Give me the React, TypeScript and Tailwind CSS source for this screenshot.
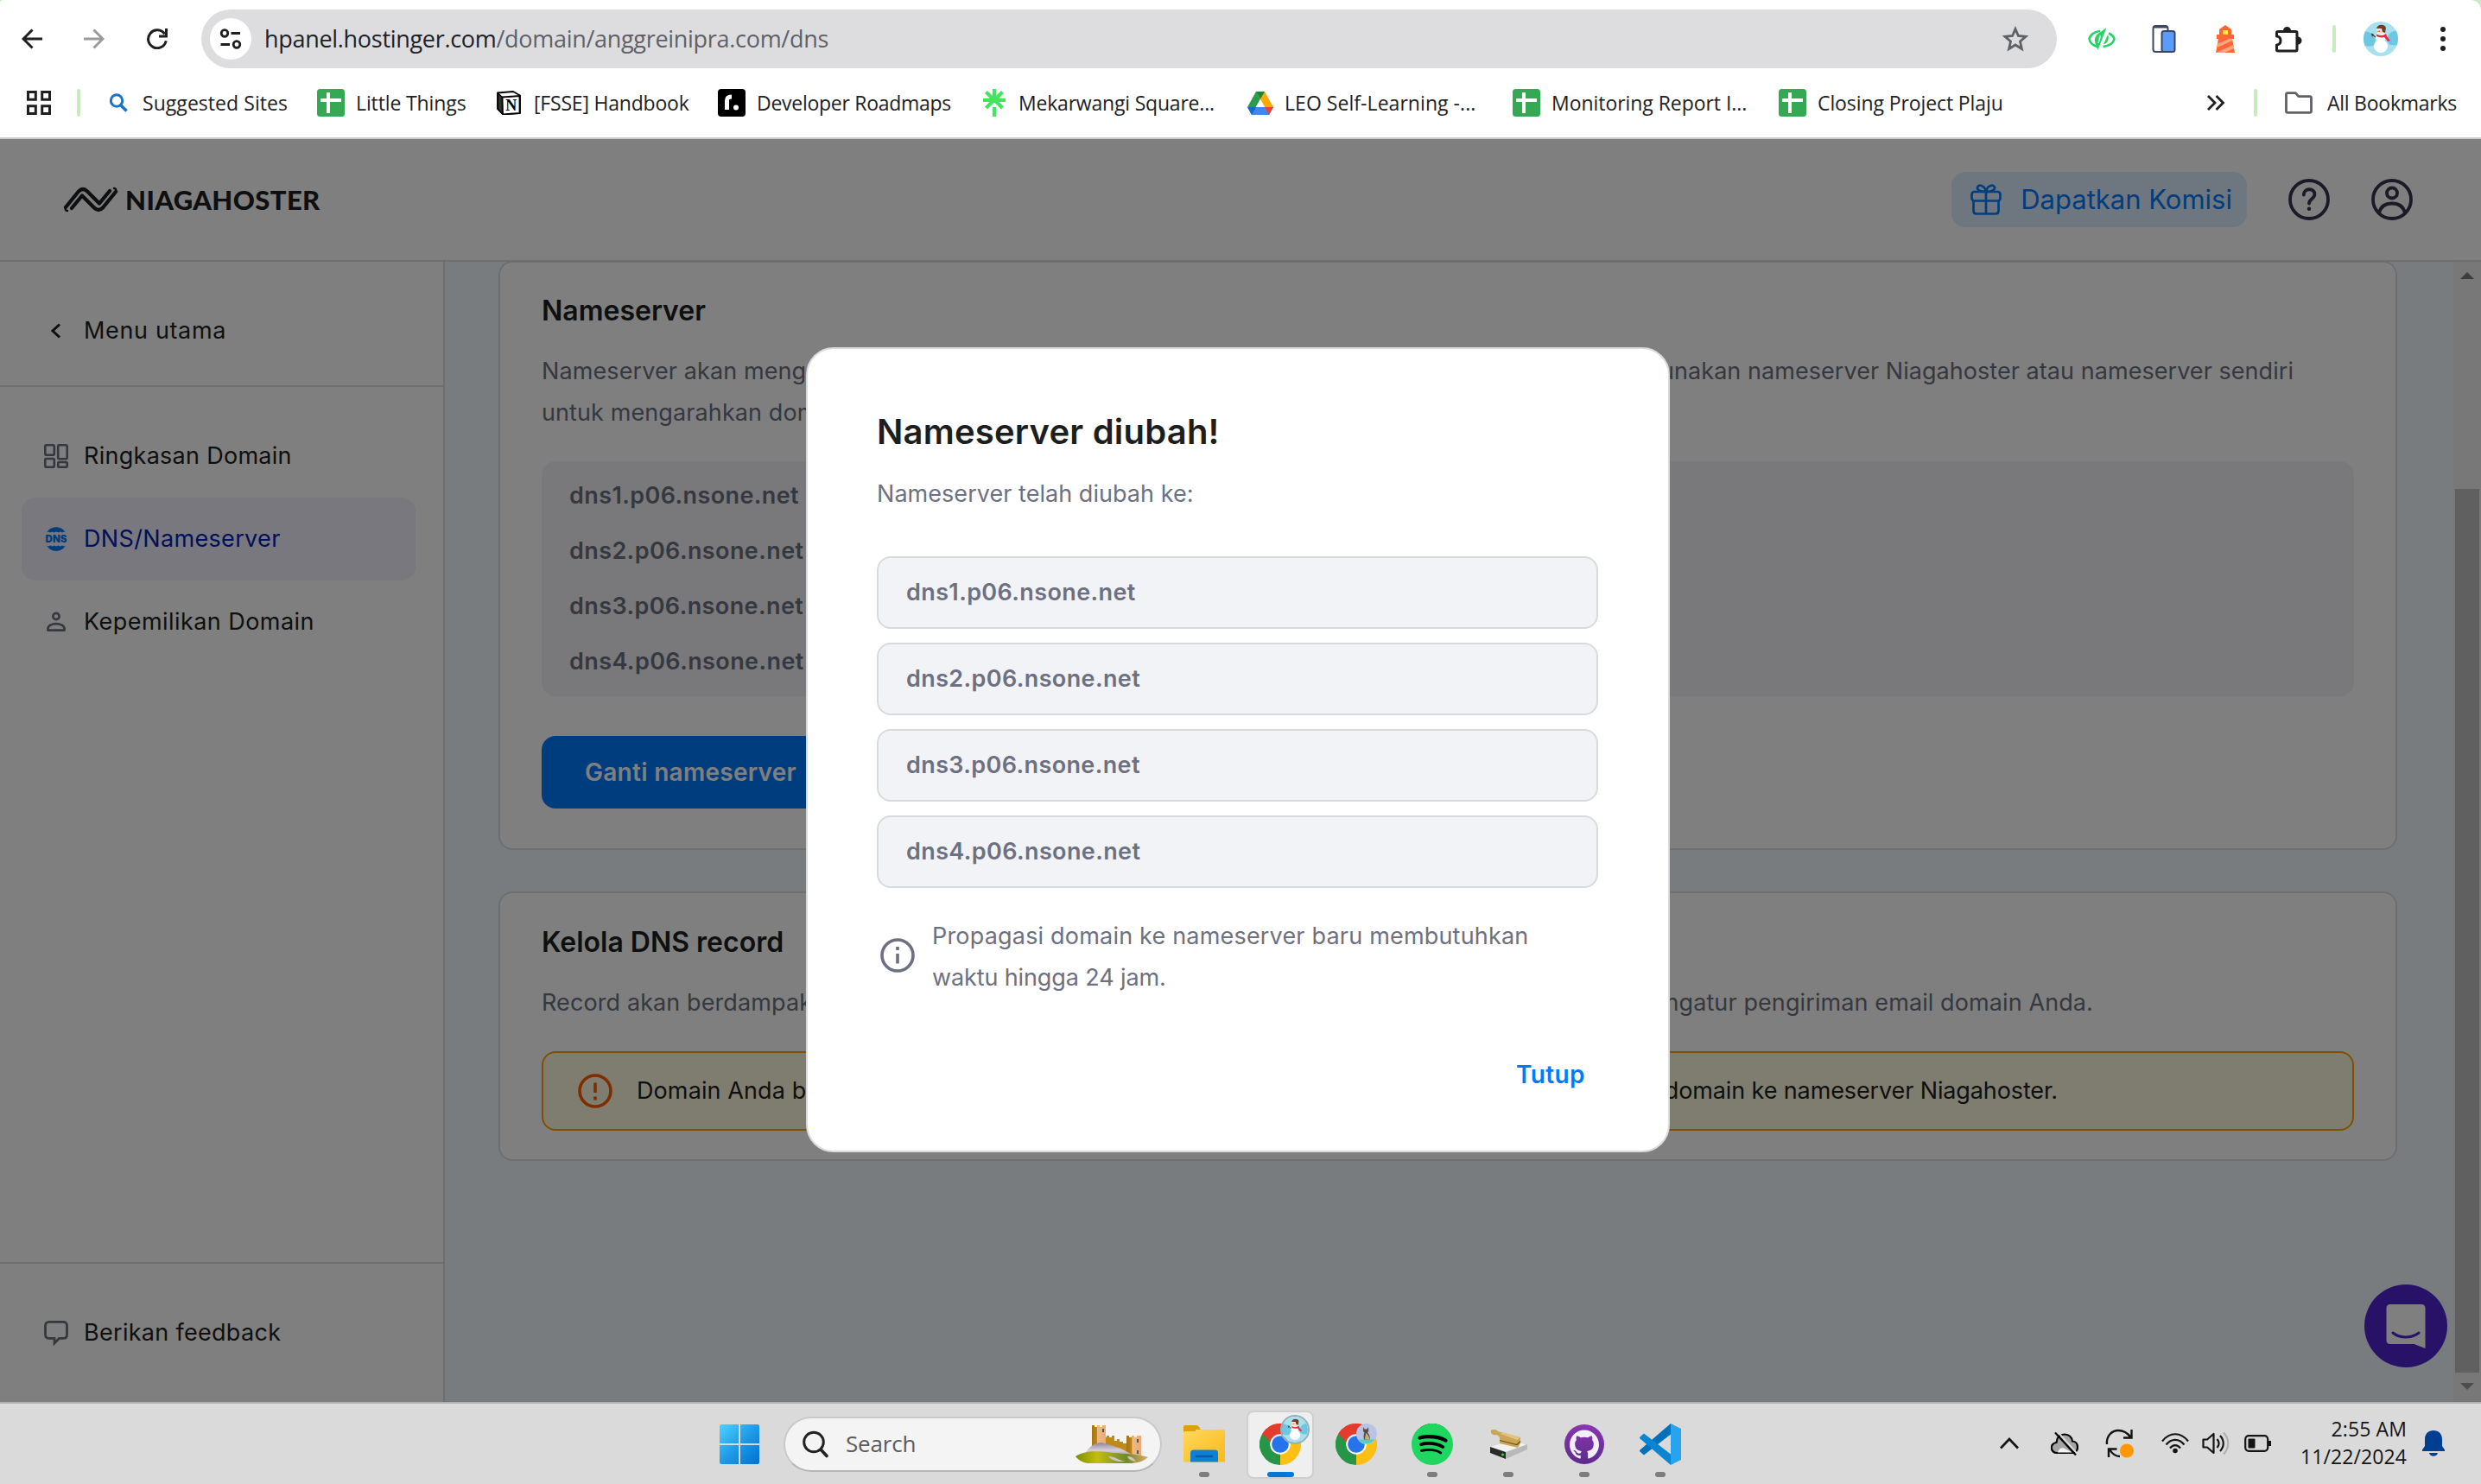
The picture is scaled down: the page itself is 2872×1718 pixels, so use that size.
import type { ReactNode } from "react";
import { SiGithub, SiSpotify } from "react-icons/si";

/* ---------- browser chrome icons ---------- */

const BackIcon = ({ className }: { className: string }) => (
  <svg viewBox="0 0 24 24" className={className} fill="none" stroke="currentColor" strokeWidth="3">
    <path d="M24 12H2.5M12.5 1.5 2 12l10.5 10.5" />
  </svg>
);

const ReloadIcon = () => (
  <svg viewBox="0 0 24 24" className="ml-[49px] h-6 w-6 text-[#1f1f1f]" fill="none" stroke="currentColor" strokeWidth="3">
    <path d="M22.2 14.2A10.4 10.4 0 1 1 20.6 6.400" />
    <path d="M22.500 0v8.900h-8.500" />
  </svg>
);

const TuneIcon = () => (
  <svg viewBox="0 0 26 24" className="h-6 w-[26px]" fill="none" stroke="#1f1f1f" strokeWidth="2.800">
    <circle cx="6" cy="5.500" r="3.800" />
    <path d="M13.500 5.500H24M1.500 18.500H12" />
    <circle cx="20" cy="18.500" r="3.800" />
  </svg>
);

const StarIcon = () => (
  <svg viewBox="0 0 32 30" className="h-[30px] w-8" fill="none" stroke="#5f6166" strokeWidth="2.800" strokeLinejoin="miter">
    <path d="m16 3.500 3.400 8 8.600.8-6.500 5.700 1.900 8.500L16 22l-7.400 4.500 1.900-8.500L4 12.300l8.600-.8z" />
  </svg>
);

const EyeLeafIcon = () => (
  <svg viewBox="0 0 32 26" className="ml-[36px] h-[26px] w-8">
    <path d="M12 22.500C6 21 2 17 1.500 13 2.500 8 8 4.500 14 4" fill="none" stroke="#25d366" strokeWidth="2.600" />
    <path d="M24 6.500c4 2 6 4.500 6.500 6.500-1 5-6 8-13 9" fill="none" stroke="#25d366" strokeWidth="2.600" />
    <path d="M21.500 0 11.500 26l-1.500-5c-4-6-2-13 4-15.500z" fill="#25d366" />
    <path d="M18 19.500c5-1.500 7-7 5-11.500z" fill="#25d366" />
    <path d="m14.500 9-2.500 9" stroke="#fff" strokeWidth="1.400" />
  </svg>
);

const DevicesIcon = () => (
  <svg viewBox="0 0 28 34" className="ml-[42px] h-[34px] w-7">
    <rect x="1.500" y="2" width="17" height="30" rx="3" fill="#fff" stroke="#3c4663" strokeWidth="2" />
    <path d="M2 4.500C2 2.500 3 2 4.500 2h11c1.500 0 2.500.5 2.500 2.500z" fill="#3c4663" />
    <rect x="11.500" y="8" width="15" height="24" rx="2.500" fill="#5a9cf8" stroke="#3c4663" strokeWidth="2" />
  </svg>
);

const LighthouseIcon = () => (
  <svg viewBox="0 0 24 32" className="ml-[45px] h-8 w-6">
    <path d="M12 0 19 5v6h3v5H2v-5h3V5z" fill="#ff6633" />
    <rect x="9" y="6" width="6" height="5" fill="#ffeb3b" />
    <path d="M4 16h16l3 16H1z" fill="#ff6633" />
    <path d="M3.500 21.500 16 16h4l.4 2L2.500 26zM2 31.500l19.500-8.600.8 4.100L11 32H1z" fill="#ffa385" />
  </svg>
);

const PuzzleIcon = () => (
  <svg viewBox="0 0 34 34" className="ml-[44px] h-[34px] w-[34px]">
    <path
      d="M5 8.500h20.500q1.500 0 1.500 1.500v19.500q0 1.500-1.500 1.500H5q-1.500 0-1.500-1.500V24c6-.6 6-9.400 0-10v-4q0-1.500 1.500-1.500z"
      fill="none"
      stroke="#1f1f1f"
      strokeWidth="3"
      strokeLinejoin="round"
    />
    <path d="M11 7.500a4.500 4.500 0 0 1 9 0zM28 14.500a4.500 4.500 0 0 1 0 9z" fill="#1f1f1f" />
  </svg>
);

const Snowman = ({ className }: { className: string }) => (
  <svg viewBox="0 0 40 40" className={className}>
    <defs>
      <clipPath id="snowClip">
        <circle cx="20" cy="20" r="20" />
      </clipPath>
    </defs>
    <g clipPath="url(#snowClip)">
      <rect width="40" height="40" fill="#a9e0f0" />
      <path d="M0 12c6-2 9 2 12 5s2 8 0 10-8 2-12 0zM40 10c-6 0-11 4-12 8s1 9 4 9 6 1 8 0z" fill="#6cc8e2" />
      <ellipse cx="20" cy="28.500" rx="8" ry="7.500" fill="#fff" />
      <ellipse cx="20" cy="18" rx="6" ry="6.500" fill="#fff" />
      <circle cx="20" cy="10" r="5" fill="#f4e4dc" />
      <path d="M15 8c1-5 9-6 11-1l-1 6-3-1-1-4z" fill="#6b3f2a" />
      <path d="m19 10-4 1.500 4 .8z" fill="#f08030" />
      <path d="M15 14.500c4 2 8 2 11-.5l1 3 4 5-3 1-4-5c-3 1-7 0-9-1z" fill="#d9343f" />
      <path d="m14 18-5-4M10 17l1-3" stroke="#4a3328" strokeWidth="1.200" />
    </g>
  </svg>
);

const AppsIcon = () => (
  <svg viewBox="0 0 28 28" className="h-7 w-7" fill="none" stroke="#1f1f1f" strokeWidth="3">
    <path d="M1.500 1.500h8.800v8.800H1.500zM17.700 1.500h8.800v8.800h-8.800zM1.500 17.700h8.800v8.800H1.500zM17.700 17.700h8.800v8.800h-8.800z" />
  </svg>
);

const MagnifierIcon = () => (
  <svg viewBox="0 0 22 22" className="h-[22px] w-[22px]" fill="none" stroke="#1a73c8">
    <circle cx="9" cy="8.500" r="6.700" strokeWidth="3" />
    <path d="m13.500 13.500 7 7" strokeWidth="3.600" />
  </svg>
);

const SheetsIcon = () => (
  <svg viewBox="0 0 32 32" className="h-8 w-8">
    <rect width="32" height="32" rx="3.500" fill="#34a853" />
    <path d="M11 4h4v7h13v4H15v13h-4V15H4v-4h7z" fill="#fff" />
  </svg>
);

const NotionIcon = () => (
  <svg viewBox="0 0 28 28" className="h-7 w-7">
    <path d="M1 2.500 19 1l8 4.500V26L7.500 27.500 1 21z" fill="#fff" stroke="#000" strokeWidth="1.800" strokeLinejoin="round" />
    <path d="m1.500 3 5 4.500V27L1.500 21z" stroke="#000" strokeWidth="1.400" fill="#333" />
    <path d="M6.500 7.500 26.500 6v20L7 27.300z" fill="#fff" stroke="#000" strokeWidth="1.800" />
    <text x="16.700" y="23" textAnchor="middle" fontFamily="Liberation Serif, serif" fontWeight="700" fontSize="18">
      N
    </text>
  </svg>
);

const RoadmapIcon = () => (
  <svg viewBox="0 0 32 32" className="h-8 w-8">
    <rect width="32" height="32" rx="4" fill="#000" />
    <path d="M10.500 24V13.500c0-3 1.500-4.500 5.500-4.500" stroke="#fff" strokeWidth="5" fill="none" />
    <circle cx="21" cy="21.500" r="3" fill="#fff" />
  </svg>
);

const LinktreeIcon = () => (
  <svg viewBox="0 0 28 32" className="h-8 w-7" stroke="#43e55e" strokeWidth="4.200">
    <path d="M14 0v15M14 21v11M1 12.800h26M4.500 3.500 14 13l9.500-9.500M4.500 22 14 12.500 23.500 22" fill="none" />
  </svg>
);

const DriveIcon = () => (
  <svg viewBox="0 0 30 27" className="h-[27px] w-[30px]">
    <path d="M10 0h10l-5 8.500L5 26 0 18z" fill="#2a9d4a" />
    <path d="M10 0h10l10 18H20z" fill="#fbab00" />
    <path d="m15 8.500-5-8.500h10z" fill="#15883a" />
    <path d="m0 18 5 9h20l5-9z" fill="#4285f4" />
    <path d="M0 18h10l-5 9z" fill="#1b66d1" />
    <path d="M20 18h10l-5 9z" fill="#ea4335" />
    <path d="M15 9.500 20 18H10z" fill="#fff" />
  </svg>
);

const FolderIcon = () => (
  <svg viewBox="0 0 32 26" className="h-[26px] w-8" fill="none" stroke="#5f6166" strokeWidth="2.800" strokeLinejoin="round">
    <path d="M1.500 3.500q0-1.800 1.800-1.800h9l3.500 4h13q1.700 0 1.700 1.800v15q0 1.800-1.700 1.800H3.300q-1.800 0-1.800-1.800z" />
  </svg>
);

const bookmarks: { label: string; icon: ReactNode; cls: string; text: string }[] = [
  { label: "Suggested Sites", icon: <MagnifierIcon />, cls: "w-[241px] gap-[17px]", text: "tracking-[0.05px]" },
  { label: "Little Things", icon: <SheetsIcon />, cls: "w-[208px] gap-[13px]", text: "tracking-[-0.12px]" },
  { label: "[FSSE] Handbook", icon: <NotionIcon />, cls: "w-[256px] gap-[15px]", text: "tracking-[-0.2px]" },
  { label: "Developer Roadmaps", icon: <RoadmapIcon />, cls: "w-[306px] gap-[13px]", text: "tracking-[-0.28px]" },
  { label: "Mekarwangi Square...", icon: <LinktreeIcon />, cls: "w-[307px] gap-[14px]", text: "tracking-[-0.2px]" },
  { label: "LEO Self-Learning -...", icon: <DriveIcon />, cls: "w-[307px] gap-[13px]", text: "tracking-[0.05px]" },
  { label: "Monitoring Report I...", icon: <SheetsIcon />, cls: "w-[308px] gap-[13px]", text: "tracking-[-0.05px]" },
  { label: "Closing Project Plaju", icon: <SheetsIcon />, cls: "w-[260px] gap-[13px]", text: "tracking-[-0.1px]" },
];

function BrowserChrome() {
  return (
    <div className="bg-[#c8ecc0]">
      <div className="h-[161px] rounded-tl-[4px] rounded-tr-[12px] border-b-2 border-[#c9cacc] bg-white font-['Open_Sans',sans-serif] text-[#202124]">
        <div className="flex h-[90px] items-center pl-[25px]">
          <BackIcon className="h-6 w-6 text-[#1f1f1f]" />
          <BackIcon className="ml-[48px] h-6 w-6 rotate-180 text-[#9a9a9a]" />
          <ReloadIcon />
          <div className="ml-[39px] flex h-[68px] w-[2148px] items-center rounded-full bg-[#dddde0] pr-[32px] pl-[10px]">
            <div className="flex h-12 w-12 items-center justify-center rounded-full bg-white">
              <TuneIcon />
            </div>
            <div className="ml-[15px] flex-1 text-[27px] tracking-[-0.3px]">
              hpanel.hostinger.com<span className="text-[#5f6166]">/domain/anggreinipra.com/dns</span>
            </div>
            <StarIcon />
          </div>
          <EyeLeafIcon />
          <DevicesIcon />
          <LighthouseIcon />
          <PuzzleIcon />
          <div className="ml-[34px] h-8 w-1 rounded-full bg-[#c8ecc0]" />
          <Snowman className="ml-[32px] h-10 w-10" />
          <div className="ml-[49px] flex flex-col gap-[5px]">
            <i className="h-1.5 w-1.5 rounded-full bg-[#1f1f1f]" />
            <i className="h-1.5 w-1.5 rounded-full bg-[#1f1f1f]" />
            <i className="h-1.5 w-1.5 rounded-full bg-[#1f1f1f]" />
          </div>
        </div>
        <div className="flex h-[58px] items-center pl-[31px] text-[23px] whitespace-nowrap">
          <AppsIcon />
          <div className="mr-[33px] ml-[30px] h-8 w-1 rounded-full bg-[#c8ecc0]" />
          {bookmarks.map((b) => (
            <div key={b.label} className={`flex shrink-0 items-center ${b.cls}`}>
              {b.icon}
              <span className={b.text}>{b.label}</span>
            </div>
          ))}
          <div className="flex flex-1 items-center justify-end pr-[28px]">
            <svg viewBox="0 0 22 18" className="h-[18px] w-[22px]" fill="none" stroke="#1f1f1f" strokeWidth="2.800">
              <path d="m2 1 8 8-8 8M11.500 1l8 8-8 8" />
            </svg>
            <div className="mr-[32px] ml-[33px] h-8 w-1 rounded-full bg-[#c8ecc0]" />
            <FolderIcon />
            <span className="ml-[17px] tracking-[-0.25px]">All Bookmarks</span>
          </div>
        </div>
      </div>
    </div>
  );
}

/* ---------- hosting panel ---------- */

const LogoMark = () => (
  <svg viewBox="0 0 64 30" className="h-[30px] w-16" fill="none" stroke="#1d1e20" strokeWidth="4.300" strokeLinejoin="round" strokeLinecap="round">
    <path d="M3 24 18 5.500q5-5 10 0L42 19.500 54 5" />
    <path d="M61 6 46 24.500q-5 5-10 0L22 10.500 10 25" />
    <path d="M3 24q-1 4 2 4M61 6q1-4-2-4" strokeWidth="2.500" />
  </svg>
);

const GiftIcon = () => (
  <svg viewBox="0 0 36 36" className="h-9 w-9" fill="none" stroke="#007bff" strokeWidth="2.700" strokeLinejoin="round">
    <rect x="1.500" y="9" width="33" height="10.500" rx="3" />
    <path d="M3.500 19.500V31q0 3.500 3.500 3.500h22q3.500 0 3.500-3.500V19.500M18 9v25.500M18 9c-6 0-10.500-2-10-5 .8-4 8.500-3 10 5zM18 9c6 0 10.500-2 10-5-.8-4-8.500-3-10 5z" />
  </svg>
);

const HelpIcon = () => (
  <svg viewBox="0 0 48 48" className="ml-[48px] h-12 w-12" fill="none" stroke="#36344d" strokeWidth="3.800" strokeLinecap="round">
    <circle cx="24" cy="24" r="22" />
    <path d="M17.800 18.500c0-8 12.600-8.500 12.600-.5 0 5-6.400 5.500-6.400 10.500" />
    <path d="M24 34.600v.2" strokeWidth="4.400" />
  </svg>
);

const UserIcon = () => (
  <svg viewBox="0 0 48 48" className="ml-[48px] h-12 w-12" fill="none" stroke="#36344d" strokeWidth="3.800">
    <circle cx="24" cy="24" r="22" />
    <circle cx="24" cy="16.500" r="6" />
    <path d="M9 39.500c2-8 8-11 15-11s13 3 15 11" />
  </svg>
);

const DashboardIcon = () => (
  <svg viewBox="0 0 28 28" className="h-7 w-7" fill="none" stroke="#6d7081" strokeWidth="2.600">
    <rect x="1.300" y="1.300" width="10.500" height="11.500" rx="1.500" />
    <rect x="16.200" y="1.300" width="10.500" height="16" rx="1.500" />
    <rect x="1.300" y="17" width="10.500" height="9.700" rx="1.500" />
    <rect x="16.200" y="21" width="10.500" height="5.700" rx="1.500" />
  </svg>
);

const DnsIcon = () => (
  <svg viewBox="0 0 28 28" className="h-7 w-7">
    <path d="M3 6.500C8-2 20-2 25 6.500l-2-1-2 1-2.300-1-2.300 1-2.400-1-2.400 1-2.300-1-2.300 1-2-1z" fill="#007bff" />
    <path d="M3 21.500c5 8.500 17 8.500 22 0l-2 1-2-1-2.300 1-2.300-1-2.400 1-2.400-1-2.300 1-2.300-1-2 1z" fill="#007bff" />
    <text x="14" y="18" textAnchor="middle" fontFamily="Inter, sans-serif" fontWeight="900" fontSize="11.500" fill="#007bff">
      DNS
    </text>
  </svg>
);

const PersonIcon = () => (
  <svg viewBox="0 0 28 28" className="h-7 w-7" fill="none" stroke="#6d7081" strokeWidth="2.700">
    <circle cx="14" cy="7.500" r="3.600" />
    <path d="M4.400 23.600v-1.500c0-8 19.200-8 19.200 0v1.500z" strokeLinejoin="round" />
  </svg>
);

const ChatIcon = () => (
  <svg viewBox="0 0 28 30" className="h-[30px] w-7" fill="none" stroke="#6d7081" strokeWidth="2.800">
    <path d="M6 2.400h16q4.500 0 4.500 4.500v10q0 4.500-4.500 4.500h-4.500l-5.500 5.600v-5.600H6q-4.500 0-4.500-4.500v-10q0-4.500 4.500-4.500z" />
  </svg>
);

function Header() {
  return (
    <header className="flex h-[142px] items-center border-b-2 border-[#dadce0] bg-white pr-[79px] pl-[73px]">
      <LogoMark />
      <span className="ml-[8px] flex-1 font-['Lato',sans-serif] text-[31px] font-black tracking-[0.4px] text-[#1d1e20]">
        NIAGAHOSTER
      </span>
      <div className="flex h-16 items-center rounded-[16px] bg-[#dcecff] pr-[17px] pl-[22px]">
        <GiftIcon />
        <span className="ml-[22px] text-[31px] tracking-[0px] text-[#007bff]">Dapatkan Komisi</span>
      </div>
      <HelpIcon />
      <UserIcon />
    </header>
  );
}

function Sidebar() {
  return (
    <aside className="flex w-[515px] shrink-0 flex-col border-r-2 border-[#dadce0] bg-white text-[27px] text-[#1d1e20]">
      <div className="flex h-[145px] items-center border-b-2 border-[#dadce0] pt-[16px] pl-[57px]">
        <svg viewBox="0 0 16 20" className="h-5 w-4" fill="none" stroke="#1d1e20" strokeWidth="3">
          <path d="M12 2.500 4 10l8 7.500" />
        </svg>
        <span className="ml-[24px] pt-[2px] tracking-[0.65px]">Menu utama</span>
      </div>
      <nav className="flex flex-1 flex-col pt-[32px] pl-[25px]">
        <a className="flex h-24 w-[456px] items-center pl-[26px]">
          <DashboardIcon />
          <span className="ml-[18px] tracking-[0.28px]">Ringkasan Domain</span>
        </a>
        <a className="flex h-24 w-[456px] items-center rounded-[16px] bg-[#f2f0ff] pl-[26px] text-[#0022b3]">
          <DnsIcon />
          <span className="ml-[18px] tracking-[0.34px]">DNS/Nameserver</span>
        </a>
        <a className="flex h-24 w-[456px] items-center pl-[26px]">
          <PersonIcon />
          <span className="ml-[18px] tracking-[0.45px]">Kepemilikan Domain</span>
        </a>
      </nav>
      <div className="flex h-[162px] items-center border-t-2 border-[#dadce0] pl-[51px]">
        <ChatIcon />
        <span className="ml-[18px] tracking-[0.3px]">Berikan feedback</span>
      </div>
    </aside>
  );
}

const servers = ["dns1.p06.nsone.net", "dns2.p06.nsone.net", "dns3.p06.nsone.net", "dns4.p06.nsone.net"];

function Content() {
  return (
    <main className="flex flex-1 flex-col overflow-hidden bg-[#f1f9fe] pr-[65px] pl-[62px] whitespace-nowrap">
      <section className="-mt-px h-[682px] rounded-[16px] border-2 border-[#dadce0] bg-white px-[48px] pt-[32px]">
        <h2 className="text-[32px] leading-[48px] font-semibold text-[#1d1e20]">Nameserver</h2>
        <div className="mt-[22px] flex h-12 items-center justify-between text-[27px] text-[#6d7081]">
          <p className="tracking-[0.1px]">Nameserver akan menge</p>
          <p className="pr-[70px] tracking-[0.05px]">unakan nameserver Niagahoster atau nameserver sendiri</p>
        </div>
        <p className="text-[27px] leading-[48px] tracking-[0.1px] text-[#6d7081]">untuk mengarahkan dom</p>
        <div className="mt-[32px] rounded-[16px] bg-[#f2f3f6] py-2 pl-[32px]">
          {servers.map((s) => (
            <div key={s} className="h-16 text-[27px] leading-[64px] font-semibold tracking-[0.4px] text-[#6d7081]">
              {s}
            </div>
          ))}
        </div>
        <div className="mt-[46px] h-[84px] w-[346px] rounded-[16px] bg-[#007bff] pl-[50px] text-[28px] leading-[84px] font-semibold tracking-[0.28px] text-white">
          Ganti nameserver
        </div>
      </section>
      <section className="mt-[48px] h-[312px] rounded-[16px] border-2 border-[#dadce0] bg-white px-[48px] pt-[33px]">
        <h2 className="text-[32px] leading-[48px] font-semibold text-[#1d1e20]">Kelola DNS record</h2>
        <div className="mt-[22px] flex h-12 items-center justify-between text-[27px] text-[#6d7081]">
          <p className="tracking-[0.1px]">Record akan berdampak</p>
          <p className="pr-[302px] tracking-[0.1px]">ngatur pengiriman email domain Anda.</p>
        </div>
        <div className="mt-[32px] flex h-[92px] items-center rounded-[16px] border-2 border-[#ffa000] bg-[#fffae1] pr-[341px] pl-[40px] text-[27px] text-[#1d1e20]">
          <svg viewBox="0 0 40 40" className="h-10 w-10" fill="none" stroke="#ff5a00" strokeWidth="3.600">
            <circle cx="20" cy="20" r="18" />
            <path d="M20 10.500V22M20 26.500v4" />
          </svg>
          <div className="ml-[28px] flex flex-1 justify-between">
            <p className="tracking-[0.1px]">Domain Anda be</p>
            <p className="tracking-[-0.12px]">domain ke nameserver Niagahoster.</p>
          </div>
        </div>
      </section>
    </main>
  );
}

function Scrollbar() {
  return (
    <div className="flex w-8 flex-col items-center bg-[#f1f1f1]">
      <svg viewBox="0 0 16 8" className="mt-[12px] h-2 w-4">
        <path d="m8 0 8 8H0z" fill="#7c7c7c" />
      </svg>
      <div className="mt-[243px] h-[1023px] w-7 bg-[#c1c1c1]" />
      <svg viewBox="0 0 16 8" className="mt-[12px] h-2 w-4">
        <path d="M0 0h16L8 8z" fill="#9a9a9a" />
      </svg>
    </div>
  );
}

function ChatLauncher() {
  return (
    <div className="absolute top-[1326px] right-[39px] flex h-24 w-24 items-center justify-center rounded-full bg-[#5025d1]">
      <svg viewBox="0 0 46 52" className="h-[52px] w-[46px]">
        <path d="M5 1h36q4.500 0 4.500 4.500V52l-13-5H5Q.5 47 .5 42.500v-37Q.5 1 5 1z" fill="#fff" />
        <path d="M8 34c8 6.500 22 6.500 30 0" fill="none" stroke="#5025d1" strokeWidth="3" strokeLinecap="round" />
      </svg>
    </div>
  );
}

function Modal() {
  return (
    <div className="absolute inset-0 flex items-start bg-black/50 pt-[241px] pl-[933px]">
      <div className="h-[932px] w-[1000px] rounded-[32px] border-2 border-[#d8dadb] bg-white pr-[81px] pl-[80px] pt-[64px] text-[27px] text-[#6d7081]">
        <h1 className="text-[40px] leading-[64px] font-semibold tracking-[0.2px] text-[#1d1e20]">Nameserver diubah!</h1>
        <p className="mt-[16px] leading-[48px] tracking-[0.04px]">Nameserver telah diubah ke:</p>
        <div className="mt-[48px] flex flex-col gap-4">
          {servers.map((s) => (
            <div
              key={s}
              className="h-[84px] rounded-[16px] border-2 border-[#d8dadb] bg-[#f2f3f6] pl-[32px] leading-[80px] font-semibold tracking-[0.38px]"
            >
              {s}
            </div>
          ))}
        </div>
        <div className="mt-[32px] flex items-center pl-[4px]">
          <svg viewBox="0 0 40 40" className="-mt-[5px] h-10 w-10" fill="none" stroke="#6d7081" strokeWidth="3.600">
            <circle cx="20" cy="20" r="18" />
            <path d="M20 18v11.500M20 10v4" />
          </svg>
          <div className="ml-[20px] leading-[48px]">
            <p className="tracking-[0.19px]">Propagasi domain ke nameserver baru membutuhkan</p>
            <p className="tracking-[-0.12px]">waktu hingga 24 jam.</p>
          </div>
        </div>
        <div className="mt-[64px] pr-[15px] text-right text-[28px] leading-[48px] font-semibold tracking-[0.4px] text-[#007bff]">Tutup</div>
      </div>
    </div>
  );
}

/* ---------- taskbar ---------- */

const WindowsIcon = () => (
  <svg viewBox="0 0 46 46" className="h-[46px] w-[46px]">
    <defs>
      <linearGradient id="win" x1="0" y1="0" x2="1" y2="1">
        <stop offset="0" stopColor="#4fd2ff" />
        <stop offset=".5" stopColor="#1f9be8" />
        <stop offset="1" stopColor="#0070cf" />
      </linearGradient>
    </defs>
    <path d="M1.500 0H22v22H0V1.500zM24 0h20.500L46 1.500V22H24zM0 24h22v22H1.500L0 44.500zM24 24h22v20.500L44.500 46H24z" fill="url(#win)" />
  </svg>
);

const CastleIcon = () => (
  <svg viewBox="0 0 84 44" className="h-11 w-[84px]">
    <defs>
      <linearGradient id="hill" x1="0" y1="0" x2="1" y2="0">
        <stop offset="0" stopColor="#7d8f00" />
        <stop offset=".3" stopColor="#c3bd10" />
        <stop offset=".7" stopColor="#6f8a2a" />
        <stop offset="1" stopColor="#e0a868" />
      </linearGradient>
      <linearGradient id="rock" x1="0" y1="0" x2="0" y2="1">
        <stop offset="0" stopColor="#8d8398" />
        <stop offset=".5" stopColor="#d8d0dc" />
        <stop offset="1" stopColor="#90869a" />
      </linearGradient>
      <linearGradient id="tower" x1="0" y1="0" x2="1" y2="0">
        <stop offset="0" stopColor="#a87408" />
        <stop offset=".35" stopColor="#b98620" />
        <stop offset=".4" stopColor="#eebb80" />
        <stop offset="1" stopColor="#eda878" />
      </linearGradient>
    </defs>
    <path d="M27 14h3v-2h3v2h3v-2h3v2h3v-2h3v6h3v-2h3v3h4v2h4v14H27z" fill="#c08a18" />
    <path d="M19 0h3v2h3V0h3v2h3V0h4v24H19z" fill="url(#tower)" />
    <path d="M59 12h3v2h3v-2h3v2h3v-2h5v26H59z" fill="url(#tower)" />
    <path d="M31 4h2v4h-2zM71 16h2v4h-2zM71 29h2v4h-2z" fill="#4a5560" />
    <path d="M10 38c2-12 12-18 20-18 12 3 22 6 32 12l10 6z" fill="url(#rock)" />
    <path d="M0 36c12-8 30-6 44-4 14 1 28 1 40 5-6 5-12 7-22 7H14C8 43 3 40 0 36z" fill="url(#hill)" />
    <path d="M38 36c8 0 10 4 20 6h-8c-6-1-10-3-12-6zM60 36c6 0 8 3 10 6-6-1-9-3-10-6z" fill="#cfc4c4" />
  </svg>
);

const ExplorerIcon = () => (
  <svg viewBox="0 0 48 43" className="h-[43px] w-12">
    <defs>
      <linearGradient id="fold" x1="0" y1="0" x2="1" y2="1">
        <stop offset="0" stopColor="#ffd75e" />
        <stop offset="1" stopColor="#fbb917" />
      </linearGradient>
    </defs>
    <path d="M0 2q0-2 2-2h13q2 0 3 2l2 3h-6v5H0z" fill="#e0a000" />
    <path d="M0 9q0-2 2-2h12l4-2h28q2 0 2 2v34q0 1.500-1.500 1.500h-45Q0 42.500 0 41z" fill="url(#fold)" />
    <path d="M8 42.500V32q0-3.500 3.500-3.500h25Q40 28.500 40 32v10.500z" fill="#0f7fd6" />
    <path d="M15 36h18" stroke="#0b5ca8" strokeWidth="2.600" strokeLinecap="round" />
  </svg>
);

const ChromeIcon = () => (
  <svg viewBox="0 0 48 48" className="h-12 w-12">
    <path d="M24 24 3.200 12A24 24 0 0 1 44.800 12z" fill="#e33b2e" />
    <path d="M24 24 44.800 12A24 24 0 0 1 24 48z" fill="#fcc014" />
    <path d="M24 24v24A24 24 0 0 1 3.200 12z" fill="#289445" />
    <path d="M24 13h21.300c2.500 6 3.400 12-.5 20.500C40 43 32 48 24 48l9.500-18.500z" fill="#fcc014" />
    <path d="M3.200 12C8 4.500 15 0 24 0s17 5 21.300 13H24c-6 0-9.500 4-10.500 9z" fill="#e33b2e" />
    <circle cx="24" cy="24" r="11.800" fill="#fff" />
    <circle cx="24" cy="24" r="9.800" fill="#2674eb" />
  </svg>
);

const CatBadge = () => (
  <svg viewBox="0 0 24 24" className="absolute top-0 right-0 h-6 w-6">
    <circle cx="12" cy="12" r="12" fill="#b9c4e2" />
    <path d="M2.500 18.500h19A12 12 0 0 1 2.500 18.500z" fill="#4fd0c4" />
    <path d="m8 4 1.500 2.500h3L14 4l.2 5-1.200 1.500c2 2 3 4 2.600 8H9c-.8-4-.4-6 .5-8L8 9z" fill="#5a4a40" />
    <path d="M11 11c2 1 4 4 4.500 7.500H10z" fill="#c9ab80" />
  </svg>
);

const DiskIcon = () => (
  <svg viewBox="0 0 44 34" className="ml-[2px] h-[34px] w-11">
    <path d="m0 20 24-7 19 5-19 10z" fill="#f2f2f2" />
    <path d="m0 20 18 6v8L0 27z" fill="#2b2b2b" />
    <path d="m18 26 25-9v6l-25 11z" fill="#b9b9bb" />
    <circle cx="14.500" cy="29" r="1.600" fill="#3ed03e" />
    <path d="M1 1c3-2 7-1 8 1l5 1.500L35 9v7l-3 5-21-5v-7L8 6C4 7 0 5 1 1z" fill="#c9a757" />
    <path d="m11 4.500 5-1L35 9l-4 3z" fill="#e0c47c" />
    <path d="m11 12.500 20 5 4-4" stroke="#6d531c" strokeWidth="1.200" fill="none" />
  </svg>
);

const GithubIcon = () => (
  <div className="flex h-[46px] w-[46px] items-center justify-center rounded-full bg-gradient-to-b from-[#8a35b0] to-[#5c2c8c]">
    <SiGithub className="h-[34px] w-[34px] text-[#f3eef8]" />
  </div>
);

const VscodeIcon = () => (
  <svg viewBox="0 0 48 48" className="h-12 w-12">
    <path d="M36 0v12.500L5 36.500l-4.500-4q-1-1 0-2z" fill="#0070b8" />
    <path d="M36 48V35.500L5 11.500l-4.500 4q-1 1 0 2z" fill="#0a85d1" />
    <path d="M36 0 48 6v36l-12 6z" fill="#27a3f0" />
  </svg>
);

function TaskSlot({ children, mark = "dot" }: { children: ReactNode; mark?: "dot" | "bar" | "none" }) {
  return (
    <div className="relative flex h-[92px] w-[88px] items-center justify-center">
      {mark === "bar" && <div className="absolute top-[7px] h-[79px] w-[78px] rounded-[8px] border-2 border-[#cfcfcf] bg-[#efefef]" />}
      <div className="relative">{children}</div>
      {mark === "dot" && <i className="absolute top-[78px] h-1.5 w-3 rounded-full bg-[#7d7d7d]" />}
      {mark === "bar" && <i className="absolute top-[78px] h-1.5 w-[31px] rounded-full bg-[#0078d7]" />}
    </div>
  );
}

function Tray() {
  return (
    <div className="flex h-[92px] items-center pr-[42px] font-['Open_Sans',sans-serif] text-[#141414]">
      <svg viewBox="0 0 22 14" className="h-3.5 w-[22px]" fill="none" stroke="#141414" strokeWidth="2.600">
        <path d="M1 12.500 11 2l10 10.500" />
      </svg>
      <svg viewBox="0 0 32 28" className="ml-[37px] h-7 w-8" fill="none" stroke="#000" strokeWidth="2.200">
        <path d="M7 25a6 6 0 0 1-.5-12C7 6 11 3.500 16 3.500S24.500 7 25 11.500c8 0 8 13.500 0 13.500z" fill="#a5a5a5" />
        <path d="M8 24.500c2-6 6-6 9-4l8 4z" fill="#f4f4f4" stroke="none" />
        <path d="m8 .5 23 26" stroke="#dadada" strokeWidth="2" />
        <path d="m5 1.500 24 26" />
      </svg>
      <svg viewBox="0 0 34 34" className="ml-[31px] h-[34px] w-[34px]" fill="none" stroke="#141414" strokeWidth="2.400">
        <path d="M2 18C1 8 8 2 15 2c7 0 11 3 14.500 8M30.500 1v9.500H21M17 32c-5 0-9-3-12-8M4 33v-9.500h9.500" />
        <circle cx="25" cy="25.500" r="8" fill="#ff9800" stroke="none" />
      </svg>
      <svg viewBox="0 0 32 24" className="ml-[31px] h-6 w-8" fill="none" stroke="#141414" strokeWidth="2.200">
        <path d="M1 9.500c8.500-11 21.500-11 30 0M5.500 13.500c6-7.500 15-7.500 21 0M10 17.500c3.500-4.500 8.500-4.500 12 0" />
        <circle cx="16" cy="20.500" r="2.800" fill="#141414" stroke="none" />
      </svg>
      <svg viewBox="0 0 32 28" className="ml-[15px] h-7 w-8" fill="none" stroke="#141414" strokeWidth="2.200">
        <path d="M1.500 9.500H6L13.500 3v22L6 18.500H1.500z" strokeLinejoin="round" />
        <path d="M17.500 9c2.500 3 2.500 7 0 10M21 5c5 5.500 5 12.500 0 18" />
        <path d="M25 1.500c7 7.500 7 17.500 0 25" stroke="#b0b0b0" />
      </svg>
      <svg viewBox="0 0 32 20" className="ml-[17px] h-5 w-8" fill="none" stroke="#141414" strokeWidth="2.200">
        <rect x="1.200" y="1.200" width="26" height="17.600" rx="4" />
        <path d="M29 7v6" strokeWidth="4" />
        <rect x="4.500" y="4.500" width="8" height="11" rx="1" fill="#141414" stroke="none" />
      </svg>
      <div className="ml-[33px] pb-[2px] text-right text-[23px] leading-8">
        <div className="tracking-[0.1px]">2:55 AM</div>
        <div className="tracking-[0.1px]">11/22/2024</div>
      </div>
      <svg viewBox="0 0 26 30" className="ml-[18px] h-[30px] w-[26px]" fill="#003e92">
        <path d="M13 0c6 0 10 4 10 10v8l3 4.500V24H0v-1.500L3 18v-8C3 4 7 0 13 0zM8 26h10c-1 5-9 5-10 0z" />
      </svg>
    </div>
  );
}

function Taskbar() {
  return (
    <div className="flex h-[95px] justify-between border-t-2 border-[#b3b3b3] bg-[#dadada] pl-[833px]">
      <div className="flex h-[93px] items-center">
        <WindowsIcon />
        <div className="mr-[5px] ml-[28px] flex h-16 w-[438px] items-center rounded-full border-2 border-[#c9c9c9] border-b-[#b5b5b5] bg-[#f4f4f4] pr-[14px] pl-[20px]">
          <svg viewBox="0 0 30 32" className="h-8 w-[30px]" fill="none" stroke="#222" strokeLinecap="round">
            <circle cx="13" cy="13.500" r="11.300" strokeWidth="3" />
            <path d="m21.500 22.500 6.500 7" strokeWidth="3.600" />
          </svg>
          <span className="ml-[20px] flex-1 font-['Open_Sans',sans-serif] text-[26px] tracking-[-0.2px] text-[#5c5c5c]">Search</span>
          <CastleIcon />
        </div>
        <TaskSlot>
          <ExplorerIcon />
        </TaskSlot>
        <TaskSlot mark="bar">
          <ChromeIcon />
          <Snowman className="absolute -top-[10px] -right-[10px] h-[34px] w-[34px] rounded-full border-2 border-[#8fb3bd]" />
        </TaskSlot>
        <TaskSlot mark="none">
          <ChromeIcon />
          <CatBadge />
        </TaskSlot>
        <TaskSlot>
          <div className="m-px h-[46px] w-[46px] rounded-full bg-black">
            <SiSpotify className="-m-px h-12 w-12 text-[#1fd760]" />
          </div>
        </TaskSlot>
        <TaskSlot>
          <DiskIcon />
        </TaskSlot>
        <TaskSlot>
          <GithubIcon />
        </TaskSlot>
        <TaskSlot>
          <VscodeIcon />
        </TaskSlot>
      </div>
      <Tray />
    </div>
  );
}

export default function App() {
  return (
    <div className="flex h-[1718px] w-[2872px] flex-col overflow-hidden font-['Inter',sans-serif]">
      <BrowserChrome />
      <div className="relative flex h-[1462px] flex-col">
        <Header />
        <div className="flex h-[1320px]">
          <Sidebar />
          <Content />
          <Scrollbar />
        </div>
        <ChatLauncher />
        <Modal />
      </div>
      <Taskbar />
    </div>
  );
}
